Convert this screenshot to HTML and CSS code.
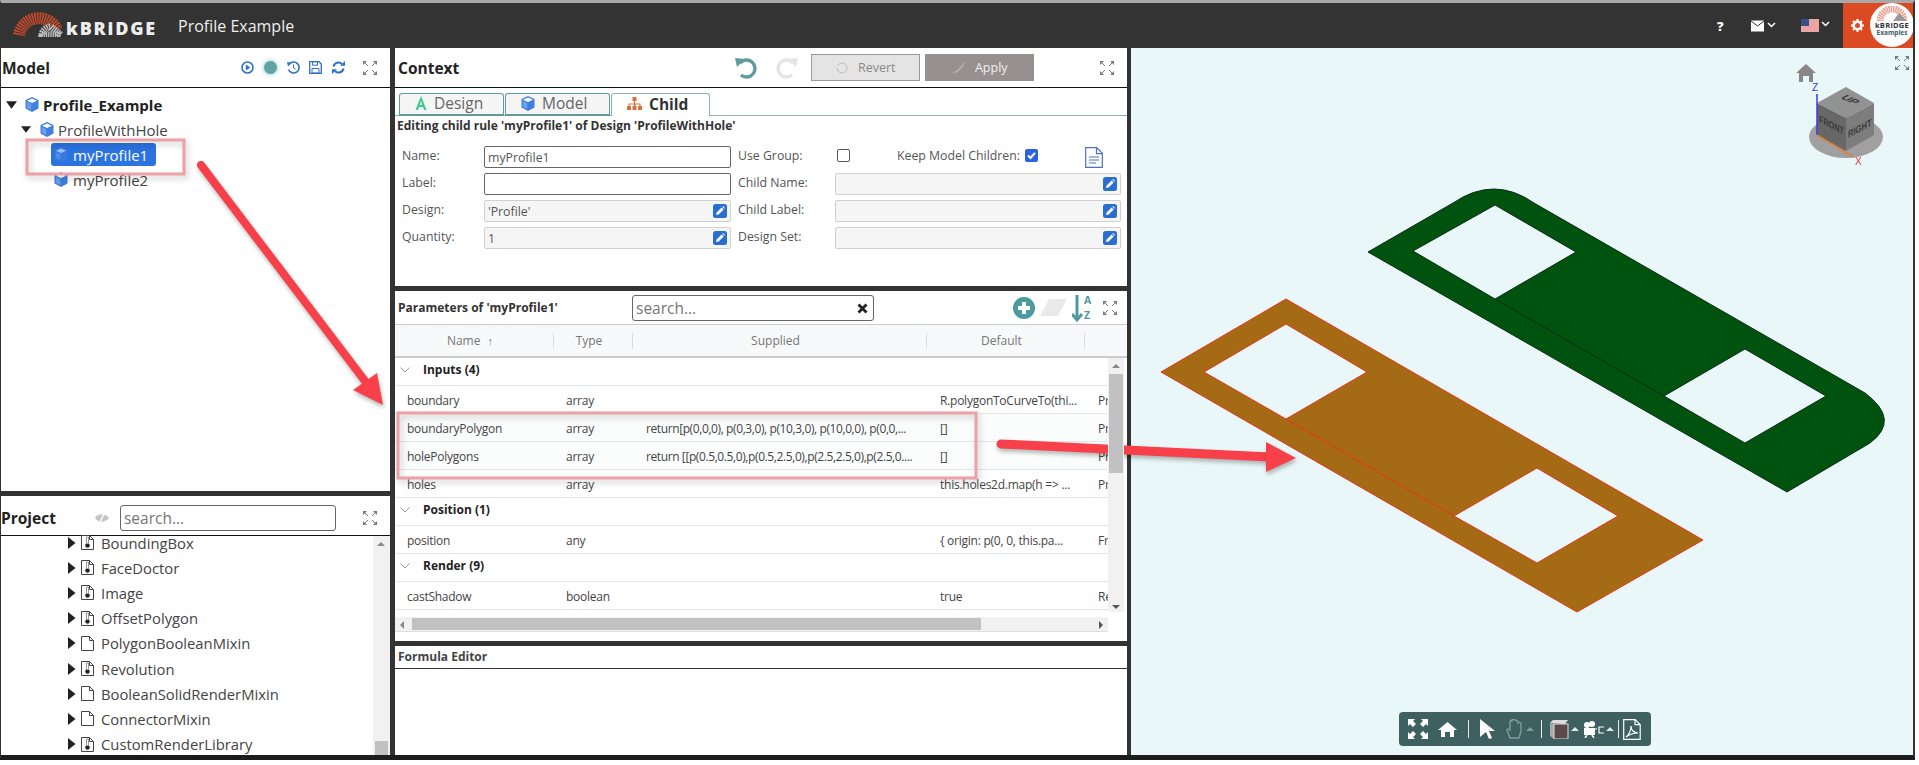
FILE: index.html
```html
<!DOCTYPE html>
<html lang="en">
<head>
    <meta charset="UTF-8">
    <title>Profile Example</title>
    <link rel="stylesheet" href="styles.css">
</head>
<body>
<svg class="defs" width="0" height="0">
    <symbol id="expand" viewBox="0 0 14 14">
        <path d="M1 1l4 4M9 5l4-4M1 13l4-4M9 9l4 4" fill="none" stroke="#777" stroke-width="1"/>
        <path d="M0 0h4L0 4zM14 0v4L10 0zM0 14v-4l4 4zM14 14h-4l4-4z" fill="#777"/>
    </symbol>
    <symbol id="cube" viewBox="0 0 14 15">
        <path d="M7 0l6.500 3v8.500L7 15 .5 11.500V3z" fill="#3f7fe0"/>
        <path d="M7 1.500L12 3.700 7 6 2 3.700z" fill="#fff"/>
        <path d="M1.800 5l4.400 2v6l-4.400-2.300z" fill="#fff" opacity=".25"/>
    </symbol>
    <symbol id="edit" viewBox="0 0 14 14">
        <rect width="14" height="14" rx="2.500" fill="#2a6fd0"/>
        <path d="M3 11l.6-2.600 5-5 2 2-5 5zM9.300 2.800l.7-.7 2 2-.7.7z" fill="#fff"/>
    </symbol>
    <symbol id="page" viewBox="0 0 13 15">
        <path d="M.5.500h8l4 4v10H.500zM8.500.500v4h4" fill="#fff" stroke="#444"/>
    </symbol>
    <symbol id="page-class" viewBox="0 0 13 15">
        <path d="M.5.500h8l4 4v10H.500zM8.500.500v4h4" fill="#fff" stroke="#444"/>
        <path d="M5.500 2h2v6.500a2.200 2.200 0 1 1-2 0z" fill="#fff" stroke="#555" stroke-width=".6"/>
        <circle cx="6.500" cy="10.500" r="2" fill="#222"/>
    </symbol>
    <symbol id="caret-right" viewBox="0 0 8 12">
        <path d="M0 0l7.500 6L0 12z" fill="#222"/>
    </symbol>
    <symbol id="caret-down" viewBox="0 0 12 8">
        <path d="M0 0h12L6 8z" fill="#222"/>
    </symbol>
    <symbol id="group-open" viewBox="0 0 10 6">
        <path d="M.5.500L5 5 9.500.500" fill="none" stroke="#999"/>
    </symbol>
</svg>

<div class="app">
    <header class="topbar">
        <div class="logo">
            <svg class="logo-arc" width="50" height="28" viewBox="0 0 50 28">
                <path d="M6 26A20 20 0 0 1 44 21" fill="none" stroke="#c54a2b" stroke-width="12" stroke-dasharray="1.600 .8"/>
                <path d="M22 26A12 12 0 0 1 42 20L49 26z" fill="#333"/>
                <path d="M29 26A9 9 0 0 1 38 18L48 26z" fill="none" stroke="#bdbdbd" stroke-width="7" stroke-dasharray="1.400 .8"/>
            </svg>
            <span class="logo-text">kBRiDGE</span>
        </div>
        <span class="doc-title">Profile Example</span>
        <div class="topbar-right">
            <span class="help">?</span>
            <svg class="mail" width="25" height="12" viewBox="0 0 25 12">
                <rect width="13" height="11" y=".5" fill="#fff"/>
                <path d="M0 1l6.500 5L13 1" fill="none" stroke="#333"/>
                <path d="M17 3l3.500 3.500L24 3" fill="none" stroke="#fff" stroke-width="1.500"/>
            </svg>
            <svg class="flag" width="29" height="13" viewBox="0 0 29 13">
                <rect width="18" height="13" fill="#fff"/>
                <path d="M0 1h18M0 3h18M0 5h18M0 7h18M0 9h18M0 11h18M0 13h18" stroke="#d84a4a" stroke-width="1"/>
                <rect width="8" height="7" fill="#39508f"/>
                <path d="M21 3l3.500 3.500L28 3" fill="none" stroke="#fff" stroke-width="1.500"/>
            </svg>
            <div class="account">
                <svg class="gear" width="13" height="13" viewBox="0 0 13 13">
                    <circle cx="6.500" cy="6.500" r="3.800" fill="none" stroke="#fff" stroke-width="2.600"/>
                    <path d="M6.500 0v13M0 6.500h13M2 2l9 9M11 2l-9 9" stroke="#fff" stroke-width="2" stroke-dasharray="2 9 2"/>
                </svg>
                <div class="avatar">
                    <svg width="30" height="15" viewBox="0 0 30 15">
                        <path d="M3 15A12 12 0 0 1 27 15" fill="none" stroke="#e9a392" stroke-width="7" stroke-dasharray="1.500 .7"/>
                        <path d="M16 15l6-8 8 8z" fill="#999"/>
                    </svg>
                    <span class="avatar-name">kBRiDGE</span>
                    <span class="avatar-sub">Examples</span>
                </div>
            </div>
        </div>
    </header>

    <div class="workspace">
        <div class="col-left">
            <section class="panel model-panel">
                <div class="panel-head">
                    <h2>Model</h2>
                    <div class="head-tools">
                        <svg class="tool-play" width="13" height="13" viewBox="0 0 13 13"><circle cx="6.500" cy="6.500" r="5.500" fill="none" stroke="#2f6fc9" stroke-width="1.600"/><path d="M4.800 3.500l4.500 3-4.500 3z" fill="#2f6fc9"/></svg>
                        <span class="status-dot"></span>
                        <svg class="tool-history" width="13" height="13" viewBox="0 0 13 13"><path d="M2 3.500A5.500 5.500 0 1 1 1.500 8.500" fill="none" stroke="#2f6fc9" stroke-width="1.600"/><path d="M0 1l4.500.8L1 5.500z" fill="#2f6fc9"/><path d="M6.500 3.500V7l2 1" fill="none" stroke="#2f6fc9"/></svg>
                        <svg class="tool-save" width="13" height="13" viewBox="0 0 13 13"><path d="M.7.700h9.300l2.300 2.300v9.300H.700z" fill="none" stroke="#2f6fc9" stroke-width="1.300"/><path d="M3.500.7h5v3.500h-5zM3 7.500h7v4.500H3z" fill="none" stroke="#2f6fc9"/></svg>
                        <svg class="tool-refresh" width="13" height="13" viewBox="0 0 13 13"><path d="M1.500 5.500A5 5 0 0 1 10 3M11.500 7.500A5 5 0 0 1 3 10" fill="none" stroke="#2f6fc9" stroke-width="2"/><path d="M8 4.800h5V0zM5 8.200H0V13z" fill="#2f6fc9"/></svg>
                        <svg class="tool-expand" width="14" height="14"><use href="#expand"/></svg>
                    </div>
                </div>
                <ul class="tree">
                    <li class="tree-row tree-root">
                        <svg class="tree-caret" width="11" height="8"><use href="#caret-down"/></svg>
                        <svg class="tree-cube" width="14" height="15"><use href="#cube"/></svg>
                        <span>Profile_Example</span>
                    </li>
                    <li class="tree-row tree-l1">
                        <svg class="tree-caret" width="10" height="7"><use href="#caret-down"/></svg>
                        <svg class="tree-cube" width="14" height="15"><use href="#cube"/></svg>
                        <span>ProfileWithHole</span>
                    </li>
                    <li class="tree-row tree-l2">
                        <div class="tree-selected">
                            <svg class="tree-cube dim" width="14" height="15"><use href="#cube"/></svg>
                            <span>myProfile1</span>
                        </div>
                    </li>
                    <li class="tree-row tree-l2">
                        <div class="tree-plain">
                            <svg class="tree-cube" width="14" height="15"><use href="#cube"/></svg>
                            <span>myProfile2</span>
                        </div>
                    </li>
                </ul>
            </section>

            <section class="panel project-panel">
                <div class="panel-head">
                    <h2>Project</h2>
                    <svg class="eye" width="16" height="12" viewBox="0 0 16 12"><path d="M1 6c3-5 10-5 14 0-4 5-11 5-14 0z" fill="#c4c4c4"/><path d="M11 0L5 12" stroke="#fff" stroke-width="1.500"/></svg>
                    <input class="search project-search" placeholder="search...">
                    <svg class="tool-expand" width="14" height="14"><use href="#expand"/></svg>
                </div>
                <div class="project-body">
                    <ul class="file-list">
                        <li><svg width="8" height="12"><use href="#caret-right"/></svg><svg width="13" height="15"><use href="#page-class"/></svg><span>BoundingBox</span></li>
                        <li><svg width="8" height="12"><use href="#caret-right"/></svg><svg width="13" height="15"><use href="#page-class"/></svg><span>FaceDoctor</span></li>
                        <li><svg width="8" height="12"><use href="#caret-right"/></svg><svg width="13" height="15"><use href="#page-class"/></svg><span>Image</span></li>
                        <li><svg width="8" height="12"><use href="#caret-right"/></svg><svg width="13" height="15"><use href="#page-class"/></svg><span>OffsetPolygon</span></li>
                        <li><svg width="8" height="12"><use href="#caret-right"/></svg><svg width="13" height="15"><use href="#page"/></svg><span>PolygonBooleanMixin</span></li>
                        <li><svg width="8" height="12"><use href="#caret-right"/></svg><svg width="13" height="15"><use href="#page-class"/></svg><span>Revolution</span></li>
                        <li><svg width="8" height="12"><use href="#caret-right"/></svg><svg width="13" height="15"><use href="#page"/></svg><span>BooleanSolidRenderMixin</span></li>
                        <li><svg width="8" height="12"><use href="#caret-right"/></svg><svg width="13" height="15"><use href="#page"/></svg><span>ConnectorMixin</span></li>
                        <li><svg width="8" height="12"><use href="#caret-right"/></svg><svg width="13" height="15"><use href="#page-class"/></svg><span>CustomRenderLibrary</span></li>
                    </ul>
                    <div class="vscroll project-scroll">
                        <span class="arrow-up"></span>
                        <span class="project-thumb"></span>
                    </div>
                </div>
            </section>
        </div>

        <div class="col-center">
            <section class="panel context-panel">
                <div class="panel-head">
                    <h2>Context</h2>
                    <div class="context-actions">
                        <svg width="22" height="22" viewBox="0 0 22 22"><path d="M5 6a8.500 8.500 0 1 1 1 12" fill="none" stroke="#5c9c9e" stroke-width="3.400"/><path d="M0 1l10 1-8 8z" fill="#5c9c9e"/></svg>
                        <svg class="redo" width="22" height="22" viewBox="0 0 22 22"><path d="M17 6a8.500 8.500 0 1 0-1 12" fill="none" stroke="#e4e4e4" stroke-width="3.400"/><path d="M22 1l-10 1 8 8z" fill="#e4e4e4"/></svg>
                        <button class="btn-revert">
                            <svg width="12" height="12" viewBox="0 0 12 12"><path d="M2 3a5 5 0 1 1-1 3" fill="none" stroke="#bbb"/></svg>
                            Revert
                        </button>
                        <button class="btn-apply">
                            <svg width="13" height="12" viewBox="0 0 13 12"><path d="M1 11l5-3 6-7M4 11l8-8" fill="none" stroke="#bdb6b6"/></svg>
                            Apply
                        </button>
                    </div>
                    <svg class="tool-expand" width="14" height="14"><use href="#expand"/></svg>
                </div>
                <div class="tabs">
                    <div class="tab">
                        <svg width="12" height="14" viewBox="0 0 12 14"><path d="M6 0l5.500 14H9L8 11H4l-1 3H.500zM6 5L4.800 9h2.400z" fill="#3cc98e"/></svg>
                        Design
                    </div>
                    <div class="tab">
                        <svg width="14" height="15"><use href="#cube"/></svg>
                        Model
                    </div>
                    <div class="tab tab-active">
                        <svg width="15" height="13" viewBox="0 0 15 13"><path d="M5.500 0h4v4h-4zM0 9h4v4H0zM5.500 9h4v4h-4zM11 9h4v4h-4zM7 4h1v2.500h5.500V9h-1V7.500h-4V9H7V7.500H2.500V9h-1V6.500H7z" fill="#d5723a"/></svg>
                        Child
                    </div>
                </div>
                <div class="context-title">Editing child rule 'myProfile1' of Design 'ProfileWithHole'</div>
                <div class="rule-form">
                    <label>Name:</label>
                    <input class="field" value="myProfile1">
                    <label class="label-right">Use Group:</label>
                    <div class="checks">
                        <span class="check"></span>
                        <label class="keep-label">Keep Model Children:</label>
                        <span class="check check-on">
                            <svg width="13" height="13" viewBox="0 0 13 13"><path d="M3 6.500l2.500 2.500L10 3.800" fill="none" stroke="#fff" stroke-width="2"/></svg>
                        </span>
                        <svg class="doc" width="18" height="21" viewBox="0 0 18 21"><path d="M.7.700h11l5.600 5.600v14H.700zM11.500.700v6h6M4 10h10M4 13h10M4 16h7" fill="none" stroke="#4a72c4" stroke-width="1.200"/></svg>
                    </div>

                    <label>Label:</label>
                    <input class="field" value="">
                    <label class="label-right">Child Name:</label>
                    <div class="field-ro"><svg width="14" height="14"><use href="#edit"/></svg></div>

                    <label>Design:</label>
                    <div class="field-ro">'Profile'<svg width="14" height="14"><use href="#edit"/></svg></div>
                    <label class="label-right">Child Label:</label>
                    <div class="field-ro"><svg width="14" height="14"><use href="#edit"/></svg></div>

                    <label>Quantity:</label>
                    <div class="field-ro">1<svg width="14" height="14"><use href="#edit"/></svg></div>
                    <label class="label-right">Design Set:</label>
                    <div class="field-ro"><svg width="14" height="14"><use href="#edit"/></svg></div>
                </div>
            </section>

            <section class="panel params-panel">
                <div class="params-head">
                    <span class="params-title">Parameters of 'myProfile1'</span>
                    <div class="params-search">
                        <input class="search" placeholder="search...">
                        <svg class="clear" width="11" height="11" viewBox="0 0 11 11"><path d="M1.500 1.500l8 8M9.500 1.500l-8 8" stroke="#222" stroke-width="2.800"/></svg>
                    </div>
                    <svg width="22" height="22" viewBox="0 0 22 22"><circle cx="11" cy="11" r="11" fill="#4d9a9e"/><path d="M11 5v12M5 11h12" stroke="#fff" stroke-width="4"/></svg>
                    <svg class="eraser" width="27" height="17" viewBox="0 0 27 17"><path d="M9 0h18L18 17H0z" fill="#e9e9e9"/></svg>
                    <svg width="22" height="32" viewBox="0 0 22 32"><path d="M5 3v24M0 22l5 6 5-6" fill="none" stroke="#4d9a9e" stroke-width="3"/><text x="12" y="12" class="sort-letter">A</text><text x="12" y="27" class="sort-letter">Z</text></svg>
                    <svg class="params-expand" width="14" height="14"><use href="#expand"/></svg>
                </div>
                <div class="grid-head">
                    <span class="th th-name">Name <small>↑</small></span>
                    <span class="th th-type">Type</span>
                    <span class="th th-supplied">Supplied</span>
                    <span class="th th-default">Default</span>
                </div>
                <div class="grid-body">
                    <div class="rows">
                        <div class="row group"><svg width="10" height="6"><use href="#group-open"/></svg><b>Inputs (4)</b></div>
                        <div class="row"><span>boundary</span><span>array</span><span></span><span>R.polygonToCurveTo(thi...</span><span>Pr</span></div>
                        <div class="row tint"><span>boundaryPolygon</span><span>array</span><span>return[p(0,0,0), p(0,3,0), p(10,3,0), p(10,0,0), p(0,0,...</span><span>[]</span><span>Pr</span></div>
                        <div class="row tint"><span>holePolygons</span><span>array</span><span>return [[p(0.5,0.5,0),p(0.5,2.5,0),p(2.5,2.5,0),p(2.5,0....</span><span>[]</span><span>Pr</span></div>
                        <div class="row"><span>holes</span><span>array</span><span></span><span>this.holes2d.map(h =&gt; ...</span><span>Pr</span></div>
                        <div class="row group"><svg width="10" height="6"><use href="#group-open"/></svg><b>Position (1)</b></div>
                        <div class="row"><span>position</span><span>any</span><span></span><span>{ origin: p(0, 0, this.pa...</span><span>Fr</span></div>
                        <div class="row group"><svg width="10" height="6"><use href="#group-open"/></svg><b>Render (9)</b></div>
                        <div class="row"><span>castShadow</span><span>boolean</span><span></span><span>true</span><span>Re</span></div>
                    </div>
                    <div class="vscroll params-vscroll">
                        <span class="arrow-up"></span>
                        <span class="params-thumb"></span>
                        <span class="arrow-down"></span>
                    </div>
                </div>
                <div class="hscroll">
                    <span class="arrow-left"></span>
                    <span class="hthumb"></span>
                    <span class="arrow-right"></span>
                </div>
            </section>

            <section class="panel formula-panel">
                <div class="formula-head">Formula Editor</div>
            </section>
        </div>

        <main class="viewer">
            <svg class="scene" viewBox="1131 48 782 707" width="782" height="707">
                <path class="part-green" fill-rule="evenodd" d="M1368 252L1453 203Q1494 175 1534 203L1865 393Q1901 420 1870 443L1787 492ZM1413 251L1495 299L1576 252L1495 205ZM1664 396L1745 443L1826 396L1745 349Z"/>
                <path d="M1495 299L1664 396" class="part-green-line"/>
                <path class="part-brown" fill-rule="evenodd" d="M1161 372L1286 299L1703 540L1577 612ZM1204 372L1286 419L1367 372L1286 324ZM1454 516L1537 563L1618 516L1537 468Z"/>
                <path d="M1286 419L1454 516" class="part-brown-line"/>

                <svg x="1895" y="56" width="14" height="14" viewBox="0 0 14 14"><use href="#expand"/></svg>
                <path d="M1806 64l10 9h-3v9h-4v-6h-6v6h-4v-9h-3z" fill="#888"/>
                <ellipse cx="1846" cy="137" rx="37" ry="21" fill="#a0a0a0"/>
                <path d="M1846 87l28 16-28 15-29-15z" fill="#929292"/>
                <path d="M1817 103l29 15v33l-29-16z" fill="#676767"/>
                <path d="M1874 103l-28 15v33l28-16z" fill="#7d7d7d"/>
                <path d="M1817 94v41" stroke="#3a3ae0" stroke-width="1.500"/>
                <path d="M1817 135l36 22" stroke="#d8823a" stroke-width="1.500"/>
                <text x="1812" y="91" class="axis axis-z">Z</text>
                <text x="1855" y="165" class="axis axis-x">X</text>
                <text class="cube-label" transform="matrix(1 .5 -1 .5 1840 98)">UP</text>
                <text class="cube-label" transform="matrix(.72 .37 0 1 1819 122)">FRONT</text>
                <text class="cube-label" transform="matrix(.76 -.4 0 1 1848 138)">RIGHT</text>
            </svg>
            <div class="view-toolbar">
                <svg width="20" height="20" viewBox="0 0 20 20"><path d="M0 0h7L5 2l3 3-3 3-3-3-2 2zM20 0v7l-2-2-3 3-3-3 3-3-2-2zM0 20v-7l2 2 3-3 3 3-3 3 2 2zM20 20h-7l2-2-3-3 3-3 3 3 2-2z" fill="#fff"/></svg>
                <svg class="tb-home" width="19" height="15" viewBox="0 0 19 15"><path d="M9.500 0l9.500 8h-3v7h-4v-5h-5v5H3V8H0z" fill="#fff"/></svg>
                <span class="tb-sep"></span>
                <svg width="15" height="20" viewBox="0 0 15 20"><path d="M0 0l15 12H9l3 7-3 1-3-7-6 5z" fill="#fff"/></svg>
                <svg class="tb-hand" width="18" height="20" viewBox="0 0 18 20"><path d="M4 19L1 11c0-2 2-1 3 0V3c0-2 2-2 2 0V1c0-1 3-1 3 0v1c0-1 3-1 3 1v1c1-1 3-1 3 1v7l-2 7z" fill="none" stroke="#7f9d9d" stroke-width="1.400"/></svg>
                <span class="tb-caret"></span>
                <span class="tb-sep tb-sep-view"></span>
                <svg width="19" height="19" viewBox="0 0 19 19"><path d="M0 3l3-3h15l-3 4z" fill="#ddd"/><path d="M0 3l4 1v15l-4-3z" fill="#aaa"/><rect x="4" y="4" width="14" height="15" fill="#5a4a4a" stroke="#ddd"/></svg>
                <span class="tb-caret"></span>
                <svg width="21" height="17" viewBox="0 0 21 17"><circle cx="4" cy="4" r="3" fill="#fff"/><circle cx="9" cy="3" r="3" fill="#fff"/><rect x="1" y="7" width="11" height="7" fill="#fff"/><path d="M4 14l-2 3M9 14l2 3" stroke="#fff" stroke-width="1.500"/><path d="M12 8h2M21 6h-5v6h5" fill="none" stroke="#fff" stroke-width="1.200"/></svg>
                <span class="tb-caret"></span>
                <span class="tb-sep tb-sep-pdf"></span>
                <svg width="18" height="21" viewBox="0 0 18 21"><path d="M.7.700h11.500l5 5v14.600H.700zM12 .7v5h5" fill="none" stroke="#fff" stroke-width="1.200"/><path d="M3 18c3-2 5-7 5-11 0 4 3 7 7 7-4 0-8 1-12 4z" fill="none" stroke="#fff" stroke-width="1.200"/></svg>
            </div>
        </main>
    </div>

    <svg class="annotations" width="1919" height="765" viewBox="0 0 1919 765">
        <rect class="note-box" x="27" y="140" width="157" height="34"/>
        <rect class="note-box" x="398" y="413" width="578" height="65"/>
        <path class="note-arrow" d="M201 165L365 381" stroke-width="8" stroke-linecap="round"/>
        <path class="note-fill" d="M383 405L353 390L377 373z"/>
        <path class="note-arrow" d="M1001 444L1270 457" stroke-width="9" stroke-linecap="round"/>
        <path class="note-fill" d="M1296 458L1266 442L1266 472z"/>
    </svg>
</div>
</body>
</html>
```

FILE: styles.css
```css
* {
    box-sizing: border-box;
}

body {
    margin: 0;
    background-color: #fff;
    font-family: "Open Sans", sans-serif;
    color: #333;
    overflow: hidden;
}

.defs {
    position: absolute;
}

svg {
    display: block;
    flex: none;
}

.app {
    position: relative;
    width: 1915px;
    height: 760px;
    background-color: #333;
    border-top: 3px solid #a8a8a8;
    border-right: 2px solid #333;
    border-bottom: 5px solid #1c1c1c;
    border-left: 1px solid #333;
    display: flex;
    flex-direction: column;
}

/* top bar */
.topbar {
    height: 45px;
    display: flex;
    align-items: center;
    flex: none;
}

.logo {
    display: flex;
    align-items: center;
    width: 177px;
    padding-left: 12px;
}

.logo-arc {
    margin-top: -5px;
}

.logo-text {
    margin-left: 3px;
    margin-top: 5px;
    font-size: 18px;
    font-weight: 800;
    line-height: 21px;
    letter-spacing: 1.800px;
    color: #eee;
}

.doc-title {
    font-size: 16px;
    color: #eee;
}

.topbar-right {
    margin-left: auto;
    display: flex;
    align-items: center;
    height: 100%;
}

.help {
    width: 12px;
    margin-right: 22px;
    font-size: 13px;
    font-weight: 800;
    color: #fff;
}

.mail {
    margin-right: 25px;
}

.flag {
    margin-right: 13px;
}

.account {
    width: 70px;
    height: 100%;
    background-color: #dc4a24;
    display: flex;
    align-items: center;
    padding-left: 8px;
    position: relative;
    overflow: hidden;
}

.avatar {
    position: absolute;
    left: 27px;
    top: 0;
    width: 44px;
    height: 44px;
    border-radius: 50%;
    background-color: #fff;
    display: flex;
    flex-direction: column;
    align-items: center;
    padding-top: 3px;
    line-height: 8px;
}

.avatar-name {
    font-size: 7.500px;
    font-weight: 700;
    color: #333;
    letter-spacing: .3px;
}

.avatar-sub {
    font-size: 6.500px;
    font-weight: 700;
    color: #3e6060;
}

/* layout */
.workspace {
    flex: 1;
    display: flex;
    min-height: 0;
}

.col-left {
    width: 389px;
    margin-right: 5px;
    display: flex;
    flex-direction: column;
    gap: 5px;
}

.col-center {
    width: 732px;
    margin-right: 4px;
    display: flex;
    flex-direction: column;
    gap: 5px;
}

.panel {
    background-color: #fff;
    display: flex;
    flex-direction: column;
    overflow: hidden;
}

.panel-head {
    height: 40px;
    flex: none;
    display: flex;
    align-items: center;
    border-bottom: 1px solid #111;
}

.panel-head h2 {
    margin: 0;
    font-size: 15.500px;
    font-weight: 700;
    color: #222;
}

.tool-expand {
    margin-left: auto;
}

/* model panel */
.model-panel {
    height: 443px;
}

.model-panel .panel-head h2 {
    margin-left: 1px;
}

.head-tools {
    margin-left: auto;
    display: flex;
    align-items: center;
    padding-right: 13px;
}

.tool-play {
    margin-right: 10px;
}

.status-dot {
    width: 13px;
    height: 13px;
    border-radius: 50%;
    background-color: #5fa3a3;
    box-shadow: 0 0 5px #7fc0c0;
    margin-right: 10px;
}

.tool-history {
    margin-right: 9px;
}

.tool-save {
    margin-right: 10px;
}

.tool-refresh {
    margin-right: 18px;
}

.tree {
    list-style: none;
    margin: 4px 0 0;
    padding: 0;
    font-size: 15px;
    color: #444;
}

.tree-row {
    height: 25px;
    display: flex;
    align-items: center;
}

.tree-root {
    font-weight: 700;
    color: #222;
    padding-left: 5px;
}

.tree-root .tree-caret {
    margin-right: 8px;
}

.tree-cube {
    margin-right: 4px;
}

.tree-l1 {
    padding-left: 20px;
}

.tree-l1 .tree-caret {
    margin-right: 9px;
}

.tree-l2 {
    padding-left: 50px;
}

.tree-l2 .tree-cube {
    margin-right: 5px;
}

.tree-selected,
.tree-plain {
    height: 23px;
    width: 105px;
    display: flex;
    align-items: center;
    padding-left: 3px;
    border-radius: 3px;
}

.tree-selected {
    background-color: #2b73e0;
    color: #fff;
}

.tree-selected .dim {
    opacity: .55;
}

/* project panel */
.project-panel {
    flex: 1;
    min-height: 0;
}

.project-panel .panel-head {
    padding: 4px 13px 0 0;
}

.eye {
    margin-left: 38px;
    margin-right: 10px;
}

.search {
    height: 26px;
    border: 1px solid #666;
    border-radius: 3px;
    padding: 0 3px;
    font-family: "Open Sans", sans-serif;
    font-size: 15.500px;
    background-color: #fff;
    outline: none;
}

.search::placeholder {
    color: #777;
}

.project-search {
    width: 216px;
}

.project-body {
    flex: 1;
    display: flex;
    min-height: 0;
}

.file-list {
    flex: 1;
    margin: -6px 0 0;
    padding: 0 0 0 67px;
    list-style: none;
    font-size: 14.800px;
    color: #444;
    overflow: hidden;
}

.file-list li {
    height: 25.200px;
    display: flex;
    align-items: center;
    gap: 5px;
}

.file-list li span {
    margin-left: 2px;
}

.vscroll {
    width: 17px;
    background-color: #f1f1f1;
    flex: none;
    position: relative;
}

.project-thumb {
    position: absolute;
    left: 2px;
    right: 2px;
    bottom: 0;
    height: 14px;
    background-color: #c1c1c1;
}

.arrow-up,
.arrow-down,
.arrow-left,
.arrow-right {
    position: absolute;
    width: 0;
    height: 0;
    border: 4px solid transparent;
}

.arrow-up {
    left: 4px;
    top: 6px;
    border-top-width: 0;
    border-bottom: 4px solid #888;
}

.arrow-down {
    left: 4px;
    bottom: 3px;
    border-bottom-width: 0;
    border-top: 4px solid #555;
}

/* context panel */
.context-panel {
    height: 238px;
    flex: none;
}

.context-panel .panel-head {
    padding: 0 13px 0 3px;
}

.context-actions {
    margin-left: 276px;
    display: flex;
    align-items: center;
}

.redo {
    margin-left: 19px;
}

.btn-revert,
.btn-apply {
    width: 109px;
    height: 27px;
    display: flex;
    align-items: center;
    justify-content: center;
    gap: 10px;
    font-family: "Open Sans", sans-serif;
    font-size: 12.500px;
    padding: 0;
}

.btn-revert {
    margin-left: 13px;
    background-color: #e4e4e4;
    border: 1px solid #999;
    color: #888;
}

.btn-apply {
    margin-left: 5px;
    background-color: #989090;
    border: none;
    color: #eee;
}

.tabs {
    margin-top: 5px;
    height: 23px;
    padding-left: 4px;
    display: flex;
    gap: 1px;
    border-bottom: 1px solid #8fb0b5;
    flex: none;
}

.tab {
    width: 105px;
    height: 23px;
    display: flex;
    align-items: center;
    gap: 7px;
    padding: 0 0 2px 15px;
    background-color: #f5f5f5;
    border: 1px solid #5f9a9c;
    border-bottom-width: 2px;
    border-radius: 3px 3px 0 0;
    font-size: 15.500px;
    color: #666;
}

.tab-active {
    width: 99px;
    background-color: #fff;
    border-color: #8fb0b5;
    border-bottom: 0;
    font-weight: 700;
    color: #333;
    position: relative;
    padding-bottom: 3px;
}

.context-title {
    margin: 1px 0 0 2px;
    font-size: 12px;
    font-weight: 700;
    line-height: 18px;
    color: #333;
}

.rule-form {
    margin-top: 11px;
    padding-left: 7px;
    display: grid;
    grid-template-columns: 82px 247px 104px 286px;
    grid-auto-rows: 22px;
    row-gap: 5px;
    font-size: 12.300px;
    color: #555;
    align-items: center;
}

.rule-form label {
    margin-top: -3px;
}

.label-right {
    padding-left: 7px;
}

.field,
.field-ro {
    height: 22px;
    width: 100%;
    border-radius: 2px;
    font-family: "Open Sans", sans-serif;
    font-size: 12.300px;
    color: #555;
    padding: 0 3px;
}

.field {
    border: 1px solid #666;
    outline: none;
}

.field-ro {
    border: 1px solid #d0d0d0;
    background-color: #f5f5f5;
    display: flex;
    align-items: center;
    justify-content: space-between;
}

.field-ro svg {
    margin-left: auto;
}

.checks {
    display: flex;
    align-items: center;
    padding-left: 2px;
}

.check {
    width: 13px;
    height: 13px;
    border: 1px solid #555;
    border-radius: 2px;
    margin-top: -3px;
}

.keep-label {
    margin-left: 47px;
    margin-right: 5px;
}

.check-on {
    background-color: #2b62e0;
    border: none;
}

.doc {
    margin-left: 47px;
}

/* parameters */
.params-panel {
    height: 350px;
    flex: none;
}

.params-head {
    height: 34px;
    flex: none;
    display: flex;
    align-items: center;
    border-bottom: 1px solid #ccc;
}

.params-title {
    width: 237px;
    padding-left: 3px;
    font-size: 12px;
    font-weight: 700;
    color: #333;
}

.params-search {
    position: relative;
    width: 242px;
    margin-right: 139px;
}

.params-search .search {
    width: 100%;
}

.clear {
    position: absolute;
    right: 6px;
    top: 8px;
}

.eraser {
    margin: 0 5px;
}

.sort-letter {
    font-family: "Open Sans", sans-serif;
    font-size: 10.500px;
    font-weight: 700;
    fill: #4d9a9e;
}

.params-expand {
    margin-left: 9px;
}

.grid-head {
    height: 33px;
    flex: none;
    display: flex;
    align-items: center;
    background-color: #f7f9fa;
    border-bottom: 2px solid #ccc;
    font-size: 12px;
    color: #777;
}

.th {
    text-align: center;
    height: 16px;
    line-height: 16px;
    margin-top: 1px;
    padding-right: 8px;
    border-right: 1px solid #ddd;
}

.th small {
    margin-left: 4px;
    font-size: 11px;
}

.th-name {
    width: 159px;
}

.th-type {
    width: 79px;
}

.th-supplied {
    width: 294px;
}

.th-default {
    width: 158px;
}

.grid-body {
    height: 254px;
    flex: none;
    display: flex;
}

.rows {
    width: 713px;
    flex: none;
    font-size: 12px;
    letter-spacing: -.25px;
    color: #444;
}

.row {
    height: 28px;
    display: grid;
    grid-template-columns: 159px 80px 294px 158px 10px;
    align-items: center;
    padding: 2px 0 0 12px;
    border-bottom: 1px solid #e3e6e8;
    white-space: nowrap;
}

.row span:nth-child(3) {
    letter-spacing: -.4px;
}

.row.tint {
    background-color: #fbfdfd;
}

.group {
    display: flex;
    align-items: center;
    color: #222;
    letter-spacing: 0;
    padding: 0 0 4px 5px;
}

.group b {
    margin-left: 13px;
}

.params-vscroll {
    width: 16px;
    z-index: 1;
}

.params-thumb {
    position: absolute;
    left: 1px;
    right: 1px;
    top: 16px;
    height: 99px;
    background-color: #c1c1c1;
}

.hscroll {
    position: relative;
    margin-top: 5px;
    width: 713px;
    height: 15px;
    background-color: #f1f1f1;
    border-bottom: 1px solid #ddd;
}

.arrow-left {
    left: 5px;
    top: 4px;
    border-left-width: 0;
    border-right: 4px solid #888;
}

.arrow-right {
    right: 5px;
    top: 4px;
    border-right-width: 0;
    border-left: 4px solid #555;
}

.hthumb {
    position: absolute;
    left: 17px;
    width: 569px;
    top: 1px;
    bottom: 1px;
    background-color: #c1c1c1;
}

/* formula */
.formula-panel {
    flex: 1;
}

.formula-head {
    height: 23px;
    padding-left: 3px;
    line-height: 22px;
    font-size: 12px;
    font-weight: 700;
    color: #444;
    border-bottom: 1px solid #333;
}

/* viewer */
.viewer {
    width: 782px;
    background-color: #eaf7f8;
    position: relative;
    overflow: hidden;
}

.scene {
    position: absolute;
    left: 0;
    top: 0;
}

.part-green {
    fill: #00520f;
    stroke: #0b2b12;
    stroke-width: 1;
}

.part-green-line {
    stroke: #0b2b12;
    stroke-width: 1;
}

.part-brown {
    fill: #a46b14;
    stroke: #e8341c;
    stroke-width: 1;
}

.part-brown-line {
    stroke: #e8341c;
    stroke-width: 1;
}

.axis {
    font-family: "Liberation Sans", sans-serif;
    font-size: 10px;
}

.axis-z {
    fill: #3a3ae0;
}

.axis-x {
    fill: #e0343a;
}

.cube-label {
    font-family: "Liberation Sans", sans-serif;
    font-size: 10px;
    font-weight: 700;
    fill: #3a3a3a;
}

.view-toolbar {
    position: absolute;
    left: 268px;
    bottom: 9px;
    width: 252px;
    height: 34px;
    background-color: #3e6060;
    border-radius: 4px;
    display: flex;
    align-items: center;
    padding-left: 9px;
}

.tb-home {
    margin-left: 10px;
}

.tb-sep {
    width: 1px;
    height: 18px;
    background-color: #e8e8e8;
    margin: 0 11px;
}

.tb-sep-view {
    margin: 0 8px 0 3px;
}

.tb-sep-pdf {
    margin: 0 4px 0 0;
}

.tb-hand {
    margin-left: 11px;
}

.tb-caret {
    width: 0;
    height: 0;
    margin: 0 4px 0 2px;
    border: 4px solid transparent;
    border-top-width: 0;
    border-bottom: 4px solid #dfe8e8;
}

.tb-hand + .tb-caret {
    border-bottom-color: #7f9d9d;
}

/* red notes drawn over the screenshot */
.annotations {
    position: absolute;
    left: -1px;
    top: -3px;
    pointer-events: none;
}

.note-box {
    fill: none;
    stroke: #eca1a6;
    stroke-width: 3;
    filter: drop-shadow(2px 3px 3px rgba(0, 0, 0, .22));
}

.note-arrow {
    fill: none;
    stroke: #f8404b;
    filter: drop-shadow(1px 3px 2px rgba(0, 0, 0, .28));
}

.note-fill {
    fill: #f8404b;
    filter: drop-shadow(1px 3px 2px rgba(0, 0, 0, .28));
}
```
